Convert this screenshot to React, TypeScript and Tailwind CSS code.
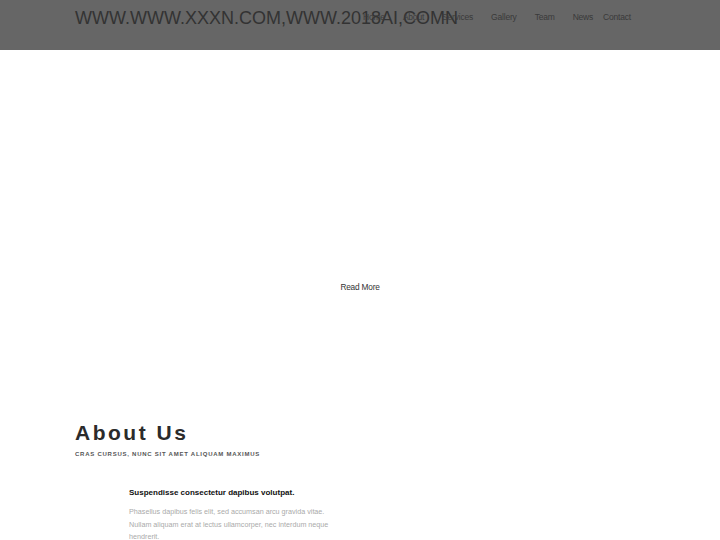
import React from 'react';

const navItems = ['Home', 'About', 'Services', 'Gallery', 'Team', 'News', 'Contact'];

const Header: React.FC = () => (
  <header className="h-[50px] bg-[#666666]">
    <div className="w-[570px] mx-auto flex items-start">
      {/* logo overflows into the nav, same as the original */}
      <div className="w-[288px] shrink-0 whitespace-nowrap pt-[9px] text-[18px] leading-none text-[#333333]">
        WWW.WWW.XXXN.COM,WWW.2018AI,COMN
      </div>
      <nav className="ml-auto mr-[15px] pt-[11px]">
        <ul className="flex gap-[18px] text-[8.5px] leading-[12px] tracking-[-0.2px] text-[#3a3a3a]">
          {navItems.map((item) => (
            <li key={item} className={item === 'Contact' ? '-ml-[8px]' : ''}>
              <a href="#">{item}</a>
            </li>
          ))}
        </ul>
      </nav>
    </div>
  </header>
);

const Hero: React.FC = () => (
  <section className="h-[360px] pt-[231px] text-center text-[8.3px] leading-[12px] tracking-[-0.2px]">
    <a href="#" className="inline-block align-top text-[#333333]">
      Read More
    </a>
  </section>
);

const About: React.FC = () => (
  <section className="w-[570px] mx-auto pt-[12px]">
    <h2 className="text-[21px] leading-none font-bold tracking-[2.5px] text-[#2b2b2b]">
      About Us
    </h2>
    <p className="mt-[7px] text-[6px] leading-[8px] font-bold uppercase tracking-[0.75px] text-[#555555]">
      Cras cursus, nunc sit amet aliquam maximus
    </p>
    <div className="ml-[54px] mt-[29px] w-[206px]">
      <h4 className="text-[8px] leading-[12px] font-bold text-[#111111]">
        Suspendisse consectetur dapibus volutpat.
      </h4>
      <p className="mt-[7px] text-[7.2px] leading-[12.5px] text-[#aaaaaa]">
        Phasellus dapibus felis elit, sed accumsan arcu gravida vitae. Nullam aliquam erat at lectus
        ullamcorper, nec interdum neque hendrerit.
      </p>
    </div>
  </section>
);

export default function App() {
  return (
    <div className="w-[720px] min-h-[540px] bg-white overflow-hidden font-['Liberation_Sans',Arial,sans-serif]">
      <Header />
      <Hero />
      <About />
    </div>
  );
}
